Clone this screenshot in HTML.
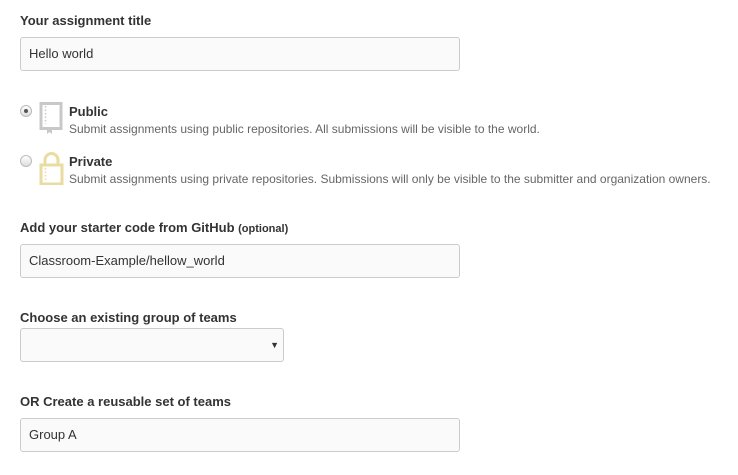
<!DOCTYPE html>
<html><head><style>
body{margin:0;background:#fff;font-family:"Liberation Sans",sans-serif;color:#333;width:738px;height:475px;position:relative;overflow:hidden}
.l{position:absolute;left:20px;font-weight:bold;font-size:13px;line-height:16px}
.l small{font-size:11px}
.in{position:absolute;left:20px;height:32px;border:1px solid #ccc;border-radius:3px;background:#fafafa;box-sizing:content-box;font-size:13px;line-height:32px;padding-left:8px;width:430px;color:#333}
.r{position:absolute;left:20px;width:10px;height:10px;border:1px solid #bbb;border-radius:50%;background:linear-gradient(#fff,#ddd)}
.t{position:absolute;left:69px;font-size:13px;font-weight:bold;line-height:16px}
.d{position:absolute;left:69px;font-size:12px;color:#666;line-height:14px}
</style></head><body>
<div class="l" style="top:13px">Your assignment title</div>
<div class="in" style="top:37px">Hello world</div>

<div class="r" style="top:105px"><div style="position:absolute;left:3px;top:3px;width:4px;height:4px;border-radius:50%;background:#555"></div></div>
<svg style="position:absolute;left:39px;top:102px" width="25" height="32" viewBox="0 0 25 32"><rect x="2" y="1.5" width="20" height="25" fill="none" stroke="#c8c8c8" stroke-width="3"/><line x1="6.5" y1="4" x2="6.5" y2="22" stroke="#c8c8c8" stroke-width="1.5" stroke-dasharray="1.5 2"/><path d="M8 26v6l2.5-2 2.5 2v-6z" fill="#c8c8c8"/></svg>
<div class="t" style="top:104px">Public</div>
<div class="d" style="top:122px">Submit assignments using public repositories. All submissions will be visible to the world.</div>

<div class="r" style="top:155px"></div>
<svg style="position:absolute;left:39px;top:151px" width="25" height="34" viewBox="0 0 25 34"><path d="M6 14V9a6.5 6.5 0 0 1 13 0v5" fill="none" stroke="#eadca0" stroke-width="3"/><rect x="2" y="14" width="21" height="19" fill="none" stroke="#eadca0" stroke-width="3"/><line x1="6.5" y1="17" x2="6.5" y2="30" stroke="#eadca0" stroke-width="1.5" stroke-dasharray="1.5 2"/></svg>
<div class="t" style="top:154px">Private</div>
<div class="d" style="top:172px">Submit assignments using private repositories. Submissions will only be visible to the submitter and organization owners.</div>

<div class="l" style="top:220px">Add your starter code from GitHub <small>(optional)</small></div>
<div class="in" style="top:244px">Classroom-Example/hellow_world</div>

<div class="l" style="top:310px">Choose an existing group of teams</div>
<div class="in" style="top:328px;width:254px;padding-left:8px"><span style="position:absolute;right:4px;top:0;font-size:9px">▼</span></div>

<div class="l" style="top:394px">OR Create a reusable set of teams</div>
<div class="in" style="top:418px">Group A</div>
</body></html>
